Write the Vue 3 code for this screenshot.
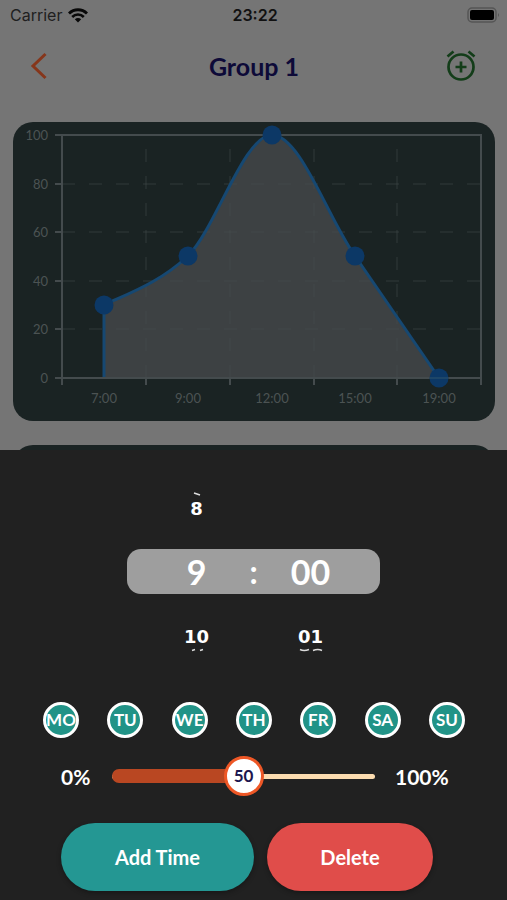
<template>
  <div class="screen">
    <div class="backdrop">
      <div class="status-bar">
        <div class="carrier">
          <span>Carrier</span>
          <svg width="20" height="15" viewBox="0 0 20 15" fill="none" stroke="#080808">
            <path d="M1 5.5C6 .5 14 .5 19 5.5" stroke-width="2.8" />
            <path d="M4.2 9C7.5 5.7 12.5 5.7 15.8 9" stroke-width="2.6" />
            <path d="M10 14.5L6.8 11.3Q10 8.6 13.2 11.3Z" fill="#080808" stroke="none" />
          </svg>
        </div>
        <span class="clock">23:22</span>
        <svg class="battery" width="33" height="17" viewBox="0 0 33 17">
          <rect x="1" y="1" width="28" height="14" rx="4" fill="none" stroke="#555" stroke-width="1.5" />
          <rect x="3" y="3" width="24" height="10" rx="2" fill="#000" />
          <path d="M31 6Q33 8 31 10Z" fill="#555" />
        </svg>
      </div>

      <header class="nav">
        <button class="icon-btn" aria-label="Back">
          <svg width="18" height="28" viewBox="0 0 18 28">
            <path d="M15.5 2L3 14L15.5 26" fill="none" stroke="#86361b" stroke-width="3" />
          </svg>
        </button>
        <h1>Group 1</h1>
        <button class="icon-btn" aria-label="Add alarm">
          <svg width="30" height="32" viewBox="0 0 30 32" fill="none" stroke="#133d19" stroke-width="2.7">
            <circle cx="15" cy="17" r="12.5" />
            <path d="M15 11.5V22.5M9.5 17H20.5" />
            <path d="M1.5 6.5L7.5 1.5M22.5 1.5L28.5 6.5" />
          </svg>
        </button>
      </header>

      <section class="card">
        <svg class="chart" viewBox="0 0 482 299">
          <path :d="areaPath" fill="#3d4143" />
          <g class="grid">
            <line v-for="x in columns.slice(1, -1)" :key="x" :x1="x" :x2="x" y1="256" y2="15" />
            <line v-for="row in rows.slice(1, -1)" :key="row.y" x1="49" x2="468" :y1="row.y" :y2="row.y" />
          </g>
          <path :d="linePath" class="line" />
          <g class="axis">
            <rect x="49" y="13" width="419" height="243" />
            <line v-for="x in columns" :key="x" :x1="x" :x2="x" y1="256" y2="263" />
            <line v-for="row in rows" :key="row.y" x1="42" x2="49" :y1="row.y" :y2="row.y" />
          </g>
          <circle v-for="p in points" :key="p.label" :cx="p.x" :cy="p.y" r="9.5" fill="#0c3866" />
          <line x1="417" x2="435" y1="256" y2="256" stroke="#1d4669" stroke-width="2" />
          <g class="labels">
            <text v-for="row in rows" :key="row.y" x="35" :y="row.y + 5" text-anchor="end">{{ row.value }}</text>
            <text v-for="p in points" :key="p.label" :x="p.x" y="281" text-anchor="middle">{{ p.label }}</text>
          </g>
        </svg>
      </section>
      <section class="card next-card"></section>
    </div>

    <section class="sheet">
      <div class="picker">
        <div class="wheel-row">
          <svg class="rim" width="28" height="4" viewBox="0 0 28 4">
            <path d="M11 1L17 3" />
          </svg>
        </div>
        <div class="wheel-row near">
          <span>8</span>
          <span></span>
          <span></span>
        </div>
        <div class="wheel-row selected">
          <span>9</span>
          <span class="colon">:</span>
          <span>00</span>
        </div>
        <div class="wheel-row near">
          <span>10</span>
          <span></span>
          <span>01</span>
        </div>
        <div class="wheel-row">
          <svg class="rim" width="28" height="4" viewBox="0 0 28 4">
            <path d="M9 2.5L12 1.5M17 2.5L20 1.5" />
          </svg>
          <span></span>
          <svg class="rim" width="28" height="4" viewBox="0 0 28 4">
            <path d="M3 1.5Q7 3.5 12 1.5M16 2.5Q21 .5 25 2.5" />
          </svg>
        </div>
      </div>

      <div class="days">
        <button
          v-for="day in days"
          :key="day.name"
          class="day"
          :class="{ active: day.active }"
          :aria-pressed="day.active"
          @click="day.active = !day.active">
          {{ day.name }}
        </button>
      </div>

      <div class="level">
        <label for="level">0%</label>
        <div class="slider">
          <div class="rail"></div>
          <div class="fill" :style="{ width: level + '%' }"></div>
          <input id="level" type="range" min="0" max="100" v-model="level" />
          <div class="value-track">
            <output for="level" class="value" :style="{ left: level + '%' }">{{ level }}</output>
          </div>
        </div>
        <span>100%</span>
      </div>

      <div class="actions">
        <button class="action add">Add Time</button>
        <button class="action delete">Delete</button>
      </div>
    </section>
  </div>
</template>

<script setup>
  import { ref } from "vue";

  const level = ref(50);

  const days = ref(
    ["MO", "TU", "WE", "TH", "FR", "SA", "SU"].map((name) => ({
      name,
      active: true,
    }))
  );

  const columns = [49, 133, 217, 301, 384, 468];
  const rows = [
    { value: 100, y: 13 },
    { value: 80, y: 62 },
    { value: 60, y: 110 },
    { value: 40, y: 159 },
    { value: 20, y: 207 },
    { value: 0, y: 256 },
  ];
  const points = [
    { label: "7:00", x: 91, y: 183 },
    { label: "9:00", x: 175, y: 134 },
    { label: "12:00", x: 259, y: 13 },
    { label: "15:00", x: 342, y: 134 },
    { label: "19:00", x: 426, y: 256 },
  ];

  const curve =
    "L91 183C119 170 147 160 175 134C203 106 231 13 259 13C287 13 314 94 342 134C370 175 398 215 426 256";
  const linePath = "M91 256" + curve;
  const areaPath = linePath + "Z";
</script>

<style>
  body {
    margin: 0;
    background: #212121;
  }
</style>

<style scoped>
  .screen {
    display: flex;
    flex-direction: column;
    height: 100vh;
    min-height: 800px;
    font-family: Lato, "Open Sans", sans-serif;
    color: #fff;
  }
  button {
    border: none;
    padding: 0;
    font-family: inherit;
    color: inherit;
    cursor: pointer;
  }

  .backdrop {
    flex: 1 1 0;
    min-height: 0;
    overflow: hidden;
    background: #757575;
  }
  .status-bar {
    display: grid;
    grid-template-columns: 1fr auto 1fr;
    align-items: center;
    height: 30px;
    padding: 0 7px 0 10px;
    font-family: Inter, sans-serif;
    font-size: 16px;
    color: #1f1f1f;
  }
  .carrier {
    display: flex;
    align-items: center;
    gap: 6px;
  }
  .clock {
    font-weight: 600;
    color: #111;
  }
  .battery {
    justify-self: end;
  }

  .nav {
    display: flex;
    align-items: center;
    justify-content: space-between;
    height: 72px;
    padding: 0 29px 0 30px;
    margin-bottom: 20px;
  }
  .nav h1 {
    margin: 0;
    font-size: 25px;
    font-weight: 700;
    color: #0d0a38;
  }
  .icon-btn {
    display: flex;
    width: 32px;
    background: none;
  }

  .card {
    margin: 0 12px 24px 13px;
    border-radius: 20px;
    background: #1a2323;
  }
  .next-card {
    height: 299px;
  }
  .chart {
    display: block;
    width: 100%;
  }
  .grid line {
    stroke: #4a5151;
    stroke-opacity: 0.5;
    stroke-dasharray: 13 14;
  }
  .line {
    fill: none;
    stroke: #164872;
    stroke-width: 3;
  }
  .axis {
    fill: none;
    stroke: #444b4d;
    stroke-width: 2;
  }
  .labels {
    font-size: 13px;
    fill: #4c5353;
  }

  .sheet {
    display: flex;
    flex-direction: column;
    padding-bottom: 9px;
    background: #212121;
  }
  .picker {
    align-self: center;
    width: 253px;
    padding-top: 42px;
  }
  .wheel-row {
    display: grid;
    grid-template-columns: 57px 57px 57px;
    justify-content: center;
    align-items: center;
    text-align: center;
    min-height: 4px;
  }
  .near {
    height: 24px;
    font-family: "DejaVu Sans", sans-serif;
    font-size: 18px;
    font-weight: 700;
  }
  .selected {
    height: 45px;
    margin: 29px 0 30px;
    border-radius: 14px;
    background: #9e9e9e;
    font-size: 34px;
    font-weight: 700;
  }
  .colon {
    font-size: 32px;
  }
  /* numbers turning out of sight at the rim of the wheel */
  .rim {
    justify-self: center;
    fill: none;
    stroke: #ddd;
    stroke-width: 1.5;
  }

  .days {
    display: flex;
    justify-content: space-between;
    padding: 0 42px 0 43px;
    margin-top: 50px;
  }
  .day {
    width: 36px;
    height: 36px;
    border: 3px solid #fff;
    border-radius: 50%;
    background: #212121;
    font-size: 17px;
    font-weight: 700;
    line-height: 30px;
    display: flex;
    justify-content: center;
  }
  .day.active {
    background: #219387;
  }

  .level {
    display: flex;
    align-items: center;
    gap: 20px;
    padding: 0 59px 0 61px;
    margin-top: 18px;
    font-size: 21px;
    font-weight: 700;
  }
  .level label {
    width: 31px;
  }
  .level > span {
    width: 53px;
  }
  .slider {
    flex: 1;
    position: relative;
    display: flex;
    align-items: center;
    height: 40px;
  }
  .rail {
    flex: 1;
    height: 5px;
    border-radius: 3px;
    background: #fcdcb0;
  }
  .fill {
    position: absolute;
    left: 0;
    height: 14px;
    border-radius: 7px;
    background: #b94722;
  }
  .slider input {
    position: absolute;
    width: 100%;
    height: 40px;
    margin: 0;
    appearance: none;
    background: none;
  }
  .slider input::-webkit-slider-thumb {
    appearance: none;
    width: 40px;
    height: 40px;
    box-sizing: border-box;
    border: 3px solid #ee5726;
    border-radius: 50%;
    background: #fff;
  }
  .value-track {
    position: absolute;
    left: 20px;
    right: 20px;
    height: 20px;
    pointer-events: none;
  }
  .value {
    position: absolute;
    transform: translateX(-50%);
    font-size: 17px;
    line-height: 20px;
    color: #1d174f;
  }

  .actions {
    display: flex;
    gap: 13px;
    padding: 0 74px 0 61px;
    margin-top: 27px;
  }
  .action {
    height: 68px;
    border-radius: 34px;
    font-size: 20px;
    font-weight: 700;
    box-shadow: 0 2px 5px rgba(0, 0, 0, 0.3);
  }
  .add {
    flex: 193;
    background: #249793;
  }
  .delete {
    flex: 166;
    background: #e04d4a;
  }
</style>
